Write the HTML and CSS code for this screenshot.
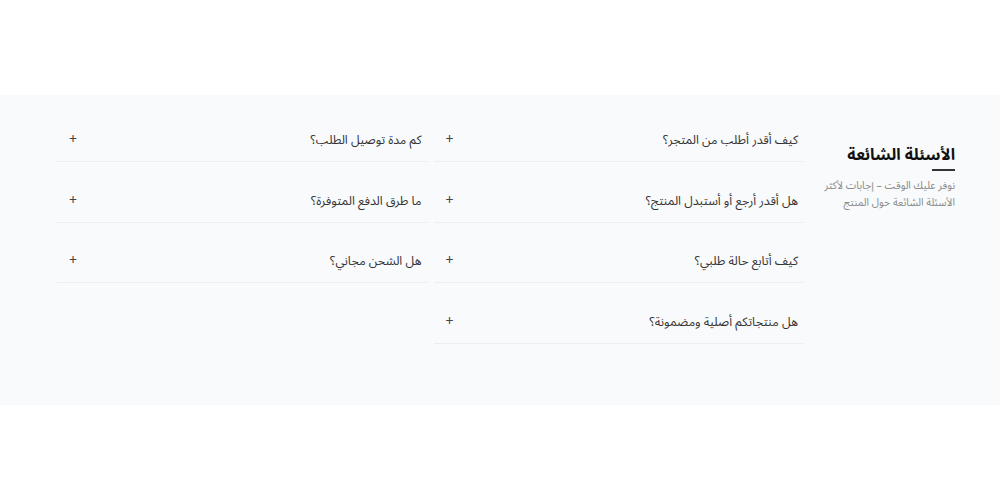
FILE: index.html
```html
<!DOCTYPE html>
<html lang="ar" dir="rtl">
<head>
<meta charset="UTF-8">
<meta name="viewport" content="width=device-width, initial-scale=1.0">
<title>الأسئلة الشائعة</title>
<link rel="stylesheet" href="styles.css">
</head>
<body>
    <section class="faq">
        <div class="faq-inner">
            <!-- Section heading -->
            <div class="faq-head">
                <h2>الأسئلة الشائعة</h2>
                <span class="faq-line"></span>
                <p>نوفر عليك الوقت – إجابات لأكثر<br>الأسئلة الشائعة حول المنتج</p>
            </div>

            <!-- Questions -->
            <div class="faq-grid">
                <div class="faq-col">
                    <button class="faq-item"><span>كيف أقدر أطلب من المتجر؟</span><span class="plus">+</span></button>
                    <button class="faq-item"><span>هل أقدر أرجع أو أستبدل المنتج؟</span><span class="plus">+</span></button>
                    <button class="faq-item"><span>كيف أتابع حالة طلبي؟</span><span class="plus">+</span></button>
                    <button class="faq-item"><span>هل منتجاتكم أصلية ومضمونة؟</span><span class="plus">+</span></button>
                </div>
                <div class="faq-col">
                    <button class="faq-item"><span>كم مدة توصيل الطلب؟</span><span class="plus">+</span></button>
                    <button class="faq-item"><span>ما طرق الدفع المتوفرة؟</span><span class="plus">+</span></button>
                    <button class="faq-item"><span>هل الشحن مجاني؟</span><span class="plus">+</span></button>
                </div>
            </div>
        </div>
    </section>
</body>
</html>
```

FILE: styles.css
```css
body {
    margin: 0;
    background-color: #fff;
    font-family: "Noto Sans Arabic", "Noto Kufi Arabic", "Tajawal", "Cairo", "Noto Sans", "DejaVu Sans", sans-serif;
    color: #333;
}
.faq {
    margin-top: 95px;
    background-color: #f9fafb;
    height: 310px;
    box-sizing: border-box;
    padding: 24px 45px 0 57px;
}
.faq-inner {
    display: flex;
    gap: 20px;
}
.faq-head {
    width: 132px;
    flex-shrink: 0;
    padding-top: 24px;
}
.faq-head h2 {
    margin: 0;
    font-size: 16px;
    font-weight: bold;
    color: #111;
    line-height: 24px;
    white-space: nowrap;
}
.faq-line {
    display: block;
    width: 23px;
    height: 2px;
    background-color: #333;
    margin: 2px 0 7px;
}
.faq-head p {
    margin: 0;
    font-size: 10.5px;
    line-height: 17px;
    color: #8a8a8a;
    white-space: nowrap;
}
.faq-grid {
    flex: 1;
    display: grid;
    grid-template-columns: 1fr 1fr;
    gap: 7px;
    align-items: start;
}
.faq-col {
    display: flex;
    flex-direction: column;
    gap: 17.6px;
}
.faq-item {
    display: flex;
    justify-content: space-between;
    align-items: center;
    width: 100%;
    background: none;
    border: 0;
    border-bottom: 1px solid #eceef0;
    padding: 10px 5px 10px 12px;
    font-family: inherit;
    font-size: 12.3px;
    line-height: 22px;
    color: #333;
    text-align: right;
    cursor: pointer;
}
.plus {
    font-size: 14px;
    color: #444;
}
```
